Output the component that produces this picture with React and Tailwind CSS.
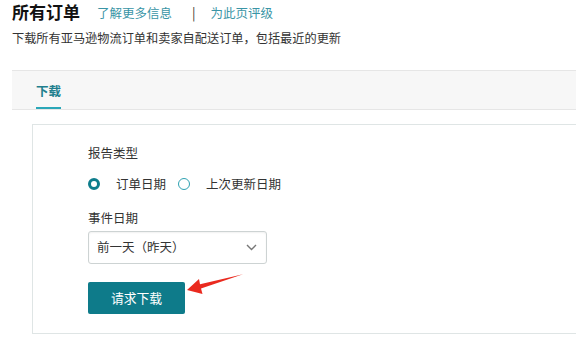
export default function App() {
  const font = { fontFamily: '"Noto Sans CJK SC", "Noto Sans", sans-serif' };
  return (
    <div className="relative w-[576px] h-[350px] overflow-hidden bg-white text-[#333]" style={font}>
      <div className="pl-[12px]">
        <div className="flex items-center h-[24px]">
          <span className="text-[17px] leading-[24px] font-bold text-[#111]">所有订单</span>
          <span className="ml-[17px] mt-[2px] text-[12.5px] leading-[20px] text-[#3a95a6]">了解更多信息</span>
          <span className="ml-[20px] mt-[2px] text-[13px] leading-[20px] text-[#333]">|</span>
          <span className="ml-[15px] mt-[2px] text-[12.5px] leading-[20px] text-[#3a95a6]">为此页评级</span>
        </div>
        <div className="mt-[4px] text-[12.2px] leading-[20px] text-[#333]">
          下载所有亚马逊物流订单和卖家自配送订单，包括最近的更新
        </div>
        <div className="mt-[22px] h-[40px] border-t border-b border-[#e6e6e6] bg-[#f7f7f7] flex">
          <div className="ml-[24px] h-[38px] flex flex-col">
            <div className="flex-1 flex items-center pt-[4px] text-[12.5px] font-bold text-[#217f8e]">下载</div>
            <div className="h-[2px] bg-[#2aa7b8]" />
          </div>
        </div>
      </div>
      <div className="ml-[32px] mt-[14px] w-[620px] h-[210px] border border-[#dfe5e5] pl-[55px] pt-[18px]">
        <div className="text-[12.5px] leading-[20px] text-[#333]">报告类型</div>
        <div className="mt-[11px] flex items-center h-[20px] text-[12.5px] text-[#333]">
          <span className="w-[12px] h-[12px] rounded-full border-[3.5px] border-[#0e7d8c] box-border" />
          <span className="ml-[16px]">订单日期</span>
          <span className="ml-[12px] w-[12px] h-[12px] rounded-full border-[1.5px] border-[#2fa2b2] box-border" />
          <span className="ml-[16px]">上次更新日期</span>
        </div>
        <div className="mt-[14px] text-[12.5px] leading-[20px] text-[#333]">事件日期</div>
        <div className="mt-[3px] w-[179px] h-[33px] rounded-[3px] border border-[#cdd3d3] shadow-[inset_0_1px_2px_rgba(0,0,0,0.06)] flex items-center pl-[8px] pr-[8px]">
          <span className="flex-1 text-[12.5px] text-[#333]">前一天（昨天）</span>
          <svg width="11" height="7" viewBox="0 0 11 7" className="mr-[1px]">
            <path d="M1 1 L5.5 5.5 L10 1" fill="none" stroke="#777" strokeWidth="1.4" />
          </svg>
        </div>
        <div className="mt-[18px] w-[97px] h-[32px] rounded-[2px] bg-[#0e7b8a] flex items-center justify-center text-[12.8px] text-white">
          请求下载
        </div>
      </div>
      <svg className="absolute left-0 top-0" width="576" height="350" viewBox="0 0 576 350">
        <polygon
          points="187,290 199,279 200,284.2 243,274.3 201,288.4 202.5,294"
          fill="#ea2a1f"
        />
      </svg>
    </div>
  );
}
